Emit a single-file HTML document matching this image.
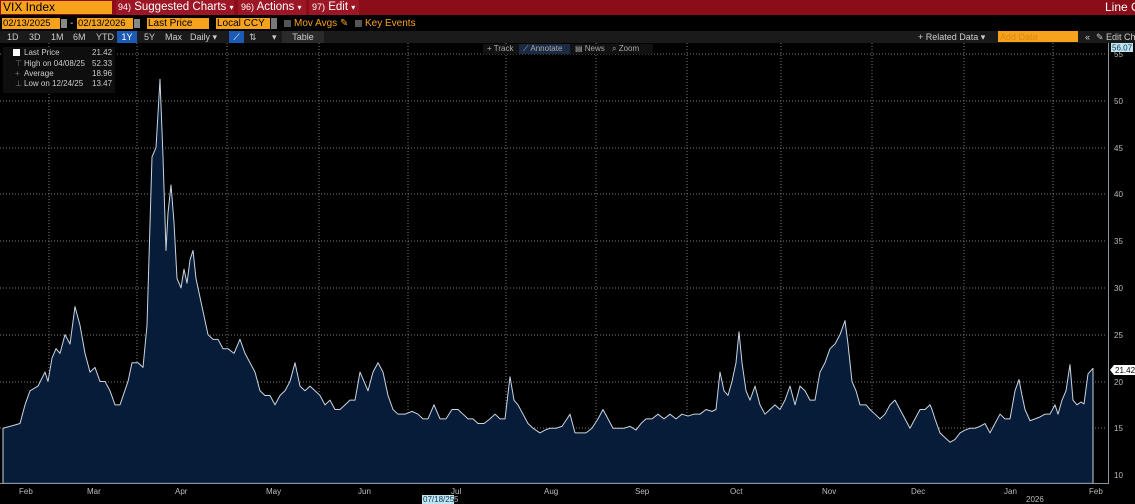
<!DOCTYPE html>
<html><head><meta charset="utf-8"><style>
*{margin:0;padding:0;box-sizing:border-box}
body{width:1135px;height:504px;background:#000;overflow:hidden;font-family:"Liberation Sans",sans-serif;position:relative;color:#ddd}
.a{position:absolute;white-space:nowrap}
.red{background:#8a0d19}
.or{background:#f7a21c;color:#000}
</style></head><body>
<div class="a red" style="left:0;top:0;width:1135px;height:15px"></div>
<div class="a or" style="left:1px;top:1px;width:111px;height:13px;font-size:12px;line-height:13px;padding-left:2px">VIX Index</div>
<div class="a" style="left:116px;top:0;height:15px;width:118px;background:#9c1626;font-size:11.5px;line-height:15px;color:#fff;padding-left:2px"><span style="font-size:9px">94)</span> Suggested Charts <span style="font-size:8px">▾</span></div>
<div class="a" style="left:238px;top:0;height:15px;width:68px;background:#9c1626;font-size:11.5px;line-height:15px;color:#fff;padding-left:3px"><span style="font-size:9px">96)</span> Actions <span style="font-size:8px">▾</span></div>
<div class="a" style="left:309px;top:0;height:15px;width:50px;background:#9c1626;font-size:11.5px;line-height:15px;color:#fff;padding-left:3px"><span style="font-size:9px">97)</span> Edit <span style="font-size:8px">▾</span></div>
<div class="a" style="left:1105px;top:0;font-size:12px;line-height:15px;color:#fff">Line C</div>

<div class="a or" style="left:2px;top:18px;width:58px;height:11px;font-size:9.5px;line-height:11px;padding-left:1px">02/13/2025</div>
<div class="a" style="left:61px;top:19px;width:6px;height:9px;background:#888"></div>
<div class="a" style="left:70px;top:18px;font-size:10px;line-height:11px">-</div>
<div class="a or" style="left:77px;top:18px;width:56px;height:11px;font-size:9.5px;line-height:11px;padding-left:1px">02/13/2026</div>
<div class="a" style="left:134px;top:19px;width:6px;height:9px;background:#888"></div>
<div class="a or" style="left:147px;top:18px;width:62px;height:11px;font-size:10px;line-height:11px;padding-left:1px">Last Price</div>
<div class="a or" style="left:216px;top:18px;width:54px;height:11px;font-size:10px;line-height:11px;padding-left:1px">Local CCY</div>
<div class="a" style="left:271px;top:18px;width:6px;height:11px;background:#777"></div>
<div class="a" style="left:284px;top:20px;width:7px;height:7px;background:#555"></div>
<div class="a" style="left:294px;top:18px;font-size:10px;line-height:11px;color:#f7a21c">Mov Avgs ✎</div>
<div class="a" style="left:355px;top:20px;width:7px;height:7px;background:#555"></div>
<div class="a" style="left:365px;top:18px;font-size:10px;line-height:11px;color:#f7a21c">Key Events</div>

<div class="a" style="left:0;top:31px;width:1135px;height:12px;background:#1a1a1a"></div>
<div class="a" style="left:0;top:31px;height:12px;font-size:9px;line-height:12px;color:#ccc">
<span class="a" style="left:7px">1D</span><span class="a" style="left:29px">3D</span><span class="a" style="left:51px">1M</span><span class="a" style="left:73px">6M</span><span class="a" style="left:96px">YTD</span>
<span class="a" style="left:117px;width:20px;height:12px;background:#1c5bb5;color:#fff;text-align:center">1Y</span>
<span class="a" style="left:144px">5Y</span><span class="a" style="left:165px">Max</span><span class="a" style="left:190px">Daily ▾</span>
<span class="a" style="left:229px;width:15px;height:12px;background:#1c5bb5;color:#fff;text-align:center">⟋</span>
<span class="a" style="left:249px">⇅</span><span class="a" style="left:272px">▾</span>
<span class="a" style="left:282px;width:42px;height:12px;background:#2a2a2a;text-align:center">Table</span>
<span class="a" style="left:918px">+ Related Data ▾</span>
<span class="a" style="left:998px;width:80px;height:11px;background:#f7a21c;color:#d88a10;padding-left:2px;top:0">Add Data</span>
<span class="a" style="left:1085px">«</span>
<span class="a" style="left:1096px">✎ Edit Ch</span>
</div>

<svg class="a" style="left:0;top:43px" width="1135" height="461" viewBox="0 43 1135 461">
<g stroke="#777" stroke-dasharray="1,2" stroke-width="1">
<line x1="0" y1="54" x2="1106" y2="54"/><line x1="0" y1="101" x2="1106" y2="101"/><line x1="0" y1="148" x2="1106" y2="148"/><line x1="0" y1="194" x2="1106" y2="194"/><line x1="0" y1="241" x2="1106" y2="241"/><line x1="0" y1="288" x2="1106" y2="288"/><line x1="0" y1="335" x2="1106" y2="335"/><line x1="0" y1="382" x2="1106" y2="382"/><line x1="0" y1="428" x2="1106" y2="428"/>
<line x1="49" y1="43" x2="49" y2="483"/><line x1="137" y1="43" x2="137" y2="483"/><line x1="227" y1="43" x2="227" y2="483"/><line x1="319" y1="43" x2="319" y2="483"/><line x1="408" y1="43" x2="408" y2="483"/><line x1="506" y1="43" x2="506" y2="483"/><line x1="596" y1="43" x2="596" y2="483"/><line x1="687" y1="43" x2="687" y2="483"/><line x1="781" y1="43" x2="781" y2="483"/><line x1="872" y1="43" x2="872" y2="483"/><line x1="964" y1="43" x2="964" y2="483"/><line x1="1053" y1="43" x2="1053" y2="483"/>
</g>
<g transform="translate(0,475) scale(1,-9.356) translate(0,-10)">
<path fill="#061c38" stroke="#ccd4de" stroke-width="1" vector-effect="non-scaling-stroke" stroke-linejoin="round" d="M3,15 L10,15.2 20,15.5 25,17.5 30,19 38,19.5 45,21 48,20 52,22.5 56,23.5 60,23 65,25 70,24 75,28 80,26 85,23 90,21 95,21.5 100,20 105,20 110,19 115,17.5 120,17.5 128,20 132,22 138,22 143,21.5 147,26 152,44 156,45 160,52.3 163,44 166,34 168,38 171,41 174,37 177,31 181,30 184,32 187,30.5 190,33 193,34 196,31 200,29 204,27 208,25 213,24.5 218,24.5 223,23.5 228,23.5 234,23 240,24.5 245,23 250,22 255,21 260,19 265,18.5 270,18.5 275,17.5 280,18.5 285,19 290,20 295,22 300,19.5 305,19 310,19.5 315,19 320,18.5 325,17.5 330,18 335,17 340,17 345,17.5 350,18 355,18 360,21 364,20 368,19 373,21 378,22 383,21 388,18.5 393,17 398,16.5 405,16.5 412,16.8 418,16.5 423,16 428,16 434,17.5 440,16 446,16 452,17 458,17 463,16.5 468,16 473,16 478,15.5 484,15.5 490,16 495,16.5 500,16 505,16 510,20.5 514,18 518,17.5 523,16.5 528,15.5 533,15 540,14.5 545,14.8 550,15 556,15 562,15.2 567,16 570,16.5 575,14.5 580,14.5 586,14.5 592,15 598,16 603,17 608,16 613,15 618,15 624,15 630,15.2 636,14.8 641,15.5 646,16 652,16 658,16.5 664,16 670,16.5 676,16 682,16.5 688,16.3 694,16.5 700,16.5 706,17 712,16.8 716,17 720,21 724,19 728,18.5 732,20 736,22 739,25.3 742,22 746,19 750,18 755,19.5 760,17.5 765,16.5 770,17 775,17.5 780,17 785,18 790,19.5 795,17.5 800,19.5 805,19 810,18 815,18 820,21 825,22 830,23.5 835,24 840,25 845,26.5 848,24 852,20 856,19 860,17.5 866,17.5 870,17 875,16.5 880,16 885,16.5 890,17.5 895,18 900,17 905,16 910,15 915,16 920,17 925,17 930,17.5 932,17 935,16 940,14.5 945,14 950,13.5 955,13.8 960,14.5 965,14.8 970,15 975,15 980,15.2 985,15.5 990,14.5 995,15.5 1000,16.5 1005,16 1010,16 1015,19 1019,20.2 1022,18.5 1025,17 1030,15.8 1035,16 1040,16.2 1045,16.5 1050,16.5 1055,17.5 1058,16.5 1062,18 1066,19 1070,21.8 1073,18 1077,17.5 1081,17.8 1084,17.6 1088,20.8 1093,21.4 L1093,9.1 L3,9.1 Z"/>
</g>
<line x1="0" y1="483.5" x2="1108" y2="483.5" stroke="#8a94a0" stroke-width="1"/>
<line x1="1108.5" y1="43" x2="1108.5" y2="484" stroke="#8a94a0" stroke-width="1"/>
<g fill="#bbb" font-size="8" font-family="Liberation Sans, sans-serif">
<text x="1114" y="57">55</text><text x="1114" y="104">50</text><text x="1114" y="151">45</text><text x="1114" y="197">40</text><text x="1114" y="244">35</text><text x="1114" y="291">30</text><text x="1114" y="338">25</text><text x="1114" y="385">20</text><text x="1114" y="431">15</text><text x="1114" y="478">10</text>
<text x="19" y="494">Feb</text><text x="87" y="494">Mar</text><text x="175" y="494">Apr</text><text x="266" y="494">May</text><text x="358" y="494">Jun</text><text x="451" y="494">Jul</text><text x="544" y="494">Aug</text><text x="635" y="494">Sep</text><text x="730" y="494">Oct</text><text x="822" y="494">Nov</text><text x="911" y="494">Dec</text><text x="1004" y="494">Jan</text><text x="1089" y="494">Feb</text><text x="1026" y="502">2026</text>
</g>
<rect x="1111" y="43" width="22" height="9" fill="#bfe6f0"/>
<text x="1112" y="50.5" font-size="8" fill="#135" font-family="Liberation Sans, sans-serif">56.07</text>
<polygon points="1110,370 1114,365 1135,365 1135,375 1114,375" fill="#fff"/>
<text x="1115" y="373" font-size="8" fill="#000" font-family="Liberation Sans, sans-serif">21.42</text>
<rect x="422" y="495" width="32" height="9" fill="#bfe6f0"/>
<text x="423" y="502" font-size="8" fill="#135" font-family="Liberation Sans, sans-serif">07/18/25</text>
<text x="454" y="502" font-size="8" fill="#bbb" font-family="Liberation Sans, sans-serif">5</text>
</svg>

<div class="a" style="left:483px;top:44px;width:170px;height:10px;background:#111;font-size:8px;line-height:10px;color:#aaa">
<span class="a" style="left:4px">+ Track</span>
<span class="a" style="left:36px;width:51px;height:10px;background:#1b2b44;padding-left:4px">⟋ Annotate</span>
<span class="a" style="left:92px">▤ News</span>
<span class="a" style="left:129px">⌕ Zoom</span>
</div>

<div class="a" style="left:3px;top:47px;width:112px;height:46px;background:#0e0e0e;font-size:8px;color:#ccc">
<div class="a" style="left:10px;top:2px;width:7px;height:7px;background:#fff"></div>
<div class="a" style="left:21px;top:1px">Last Price</div><div class="a" style="left:89px;top:1px">21.42</div>
<div class="a" style="left:12px;top:12px;color:#777">⊤</div><div class="a" style="left:21px;top:12px">High on 04/08/25</div><div class="a" style="left:89px;top:12px">52.33</div>
<div class="a" style="left:12px;top:22px;color:#777">+</div><div class="a" style="left:21px;top:22px">Average</div><div class="a" style="left:89px;top:22px">18.96</div>
<div class="a" style="left:12px;top:32px;color:#777">⊥</div><div class="a" style="left:21px;top:32px">Low on 12/24/25</div><div class="a" style="left:89px;top:32px">13.47</div>
</div>
</body></html>
